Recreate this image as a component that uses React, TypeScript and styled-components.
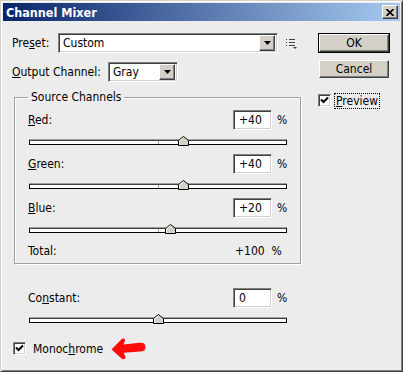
import React from "react";
import styled, { createGlobalStyle } from "styled-components";

const Global = createGlobalStyle`
  html, body { margin: 0; padding: 0; background: #ececec; }
  * { box-sizing: border-box; }
`;

const FONT = `"DejaVu Sans Condensed", "DejaVu Sans", sans-serif`;

const Window = styled.div`
  width: 403px;
  height: 372px;
  background: #ececec;
  padding: 3px;
  border: 1px solid #d4d0c8;
  border-right-color: #404040;
  border-bottom-color: #404040;
  box-shadow: inset 1px 1px #ffffff, inset -1px -1px #808080;
  font-family: ${FONT};
  font-size: 12px;
  color: #000;
  display: flex;
  flex-direction: column;
`;

const TitleBar = styled.div`
  height: 18px;
  margin: -1px -1px 0 -1px;
  background: linear-gradient(to right, #0a246a, #a6caf0);
  display: flex;
  align-items: center;
  justify-content: space-between;
  padding: 0 2px 0 3px;
`;

const Title = styled.span`
  color: #fff;
  font-weight: bold;
  font-size: 12.5px;
`;

const CloseBtn = styled.div`
  width: 16px;
  height: 14px;
  background: #d4d0c8;
  border: 1px solid;
  border-color: #fff #404040 #404040 #fff;
  box-shadow: inset -1px -1px #808080;
  display: flex;
  align-items: center;
  justify-content: center;
`;

const Body = styled.div`
  flex: 1;
  display: flex;
  padding: 12px 0 0 8px;
`;

const LeftCol = styled.div`
  width: 289px;
  display: flex;
  flex-direction: column;
`;

const RightCol = styled.div`
  margin-left: 17px;
  display: flex;
  flex-direction: column;
`;

const Row = styled.div<{ $mt?: number }>`
  display: flex;
  align-items: center;
  height: 20px;
  margin-top: ${(p) => p.$mt ?? 0}px;
`;

const Label = styled.span<{ $w?: number }>`
  width: ${(p) => (p.$w ? `${p.$w}px` : "auto")};
  flex-shrink: 0;
  white-space: nowrap;
`;

const U = styled.span`
  text-decoration: underline;
  text-underline-offset: 1px;
`;

const Sunken = styled.div`
  background: #fff;
  border: 1px solid;
  border-color: #808080 #fff #fff #808080;
  box-shadow: inset 1px 1px #404040, inset -1px -1px #d4d0c8;
`;

const Select = styled(Sunken)<{ $w: number }>`
  width: ${(p) => p.$w}px;
  height: 20px;
  display: flex;
  align-items: center;
  padding: 2px 2px 2px 4px;
`;

const SelectText = styled.span`
  flex: 1;
`;

const DropBtn = styled.div`
  width: 16px;
  height: 16px;
  background: #d4d0c8;
  border: 1px solid;
  border-color: #fff #404040 #404040 #fff;
  box-shadow: inset -1px -1px #808080;
  display: flex;
  align-items: center;
  justify-content: center;
`;

const MenuIcon = styled.svg`
  margin-left: 8px;
`;

const Group = styled.fieldset`
  margin: 8px 0 0 2px;
  width: 287px;
  padding: 6px 13px 2px 13px;
  border: 1px solid #a0a0a0;
  box-shadow: 1px 1px #fff, inset 1px 1px #fff;
  min-width: 0;
`;

const Legend = styled.legend`
  padding: 0 3px;
  margin-left: 0;
  font-size: 12px;
  line-height: 14px;
`;

const ChannelBlock = styled.div<{ $mt?: number }>`
  margin-top: ${(p) => p.$mt ?? 0}px;
`;

const ValueRow = styled.div`
  display: flex;
  align-items: center;
  height: 20px;
  justify-content: space-between;
`;

const ValueWrap = styled.div`
  display: flex;
  align-items: center;
`;

const NumBox = styled(Sunken)`
  width: 39px;
  height: 20px;
  display: flex;
  align-items: center;
  padding-left: 5px;
`;

const Pct = styled.span`
  width: 10px;
  margin-left: 5px;
`;

const SliderWrap = styled.div`
  position: relative;
  height: 14px;
  margin-top: 4px;
  width: 258px;
  margin-left: 1px;
`;

const Track = styled.div`
  position: absolute;
  left: 0;
  right: 0;
  top: 6px;
  height: 5px;
  background: #fff;
  border: 1px solid #000;
  border-top-color: #404040;
  box-shadow: 0 -1px #a0a0a0;
`;

const Tick = styled.div`
  position: absolute;
  top: 0;
  bottom: 0;
  left: 128px;
  width: 1px;
  background: #a0a0a0;
`;

const Thumb = styled.svg`
  position: absolute;
  top: 2px;
`;

const TotalRow = styled(ValueRow)`
  margin-top: 5px;
`;

const TotalVal = styled.span`
  width: 54px;
  padding-left: 2px;
  white-space: pre;
`;

const ConstantArea = styled.div`
  margin: 24px 0 0 16px;
  width: 259px;
`;

const CheckRow = styled.div<{ $mt?: number }>`
  display: flex;
  align-items: center;
  height: 15px;
  margin-top: ${(p) => p.$mt ?? 0}px;
`;

const CheckBox = styled(Sunken)`
  width: 13px;
  height: 13px;
  display: flex;
  align-items: center;
  justify-content: center;
`;

const CheckLabel = styled.span<{ $focus?: boolean }>`
  margin-left: ${(p) => (p.$focus ? 3 : 5)}px;
  padding: 0 1px;
  border: 1px dotted ${(p) => (p.$focus ? "#000" : "transparent")};
  line-height: 14px;
`;

const Arrow = styled.svg`
  margin-left: 6px;
  flex-shrink: 0;
`;

const BtnOuter = styled.div<{ $def?: boolean; $mt?: number }>`
  width: 72px;
  height: 20px;
  margin-top: ${(p) => p.$mt ?? 0}px;
  border: 1px solid ${(p) => (p.$def ? "#000" : "transparent")};
  display: flex;
`;

const Button = styled.button`
  flex: 1;
  margin: 0;
  padding: 0;
  font-family: ${FONT};
  font-size: 12px;
  color: #000;
  background: #d4d0c8;
  border: 1px solid;
  border-color: #fff #404040 #404040 #fff;
  box-shadow: inset -1px -1px #808080;
`;

const Check = () => (
  <svg width="9" height="9" viewBox="0 0 9 9">
    <path d="M1 3.5 L3.5 6 L8 1.5" stroke="#000" strokeWidth="2" fill="none" />
  </svg>
);

const Slider = ({ value, min, max }: { value: number; min: number; max: number }) => {
  const frac = (value - min) / (max - min);
  const center = Math.round(frac * 257);
  return (
    <SliderWrap>
      <Track>
        <Tick />
      </Track>
      <Thumb width="11" height="10" viewBox="0 0 11 10" style={{ left: center - 5 }}>
        <polygon points="0.5,9.5 0.5,4.5 5.5,0.5 10.5,4.5 10.5,9.5" fill="#d4d0c8" stroke="#000" />
        <polyline points="1.5,8.5 1.5,5 5.5,1.8" fill="none" stroke="#fff" />
      </Thumb>
    </SliderWrap>
  );
};

const Channel = ({
  label,
  u,
  value,
  mt,
}: {
  label: string;
  u: string;
  value: number;
  mt?: number;
}) => (
  <ChannelBlock $mt={mt}>
    <ValueRow>
      <Label>
        <U>{u}</U>
        {label}
      </Label>
      <ValueWrap>
        <NumBox>{value > 0 ? `+${value}` : `${value}`}</NumBox>
        <Pct>%</Pct>
      </ValueWrap>
    </ValueRow>
    <Slider value={value} min={-200} max={200} />
  </ChannelBlock>
);

export default function App() {
  return (
    <>
      <Global />
      <Window>
        <TitleBar>
          <Title>Channel Mixer</Title>
          <CloseBtn>
            <svg width="8" height="7" viewBox="0 0 8 7">
              <path d="M0.5 0 L7.5 7 M7.5 0 L0.5 7" stroke="#000" strokeWidth="1.6" />
            </svg>
          </CloseBtn>
        </TitleBar>
        <Body>
          <LeftCol>
            <Row>
              <Label $w={46}>
                Pre<U>s</U>et:
              </Label>
              <Select $w={220}>
                <SelectText>Custom</SelectText>
                <DropBtn>
                  <svg width="7" height="4" viewBox="0 0 7 4">
                    <polygon points="0,0 7,0 3.5,4" fill="#000" />
                  </svg>
                </DropBtn>
              </Select>
              <MenuIcon width="12" height="11" viewBox="0 0 12 11">
                <g fill="#404040">
                  <rect x="0" y="1" width="1" height="1" />
                  <rect x="0" y="4" width="1" height="1" />
                  <rect x="0" y="7" width="1" height="1" />
                  <rect x="3" y="1" width="6" height="1" />
                  <rect x="3" y="4" width="6" height="1" />
                  <rect x="3" y="7" width="6" height="1" />
                  <polygon points="7,9 11,9 9,11" />
                </g>
              </MenuIcon>
            </Row>
            <Row $mt={9}>
              <Label $w={96}>
                <U>O</U>utput Channel:
              </Label>
              <Select $w={70}>
                <SelectText>Gray</SelectText>
                <DropBtn>
                  <svg width="7" height="4" viewBox="0 0 7 4">
                    <polygon points="0,0 7,0 3.5,4" fill="#000" />
                  </svg>
                </DropBtn>
              </Select>
            </Row>
            <Group>
              <Legend>Source Channels</Legend>
              <Channel u="R" label="ed:" value={40} />
              <Channel u="G" label="reen:" value={40} mt={6} />
              <Channel u="B" label="lue:" value={20} mt={6} />
              <TotalRow>
                <Label>Total:</Label>
                <TotalVal>+100  %</TotalVal>
              </TotalRow>
            </Group>
            <ConstantArea>
              <ValueRow>
                <Label>
                  Co<U>n</U>stant:
                </Label>
                <ValueWrap>
                  <NumBox>0</NumBox>
                  <Pct>%</Pct>
                </ValueWrap>
              </ValueRow>
              <Slider value={0} min={-200} max={200} />
            </ConstantArea>
            <CheckRow $mt={15}>
              <CheckBox style={{ marginLeft: 1 }}>
                <Check />
              </CheckBox>
              <CheckLabel>
                Monoc<U>h</U>rome
              </CheckLabel>
              <Arrow width="35" height="22" viewBox="0 0 35 22">
                <path
                  d="M0.5 11.5 L11 0.8 Q14 -0.5 14 2.8 L12.5 6.5 L28.5 4.8 Q34.5 4.2 34.5 9 Q34.5 13.5 29 13.5 L12.5 14.8 L14.5 18.8 Q15 22 11.5 21.2 Z"
                  fill="#ff0a0a"
                />
              </Arrow>
            </CheckRow>
          </LeftCol>
          <RightCol>
            <BtnOuter $def>
              <Button>OK</Button>
            </BtnOuter>
            <BtnOuter $mt={6}>
              <Button>Cancel</Button>
            </BtnOuter>
            <CheckRow $mt={14}>
              <CheckBox>
                <Check />
              </CheckBox>
              <CheckLabel $focus>
                <U>P</U>review
              </CheckLabel>
            </CheckRow>
          </RightCol>
        </Body>
      </Window>
    </>
  );
}
